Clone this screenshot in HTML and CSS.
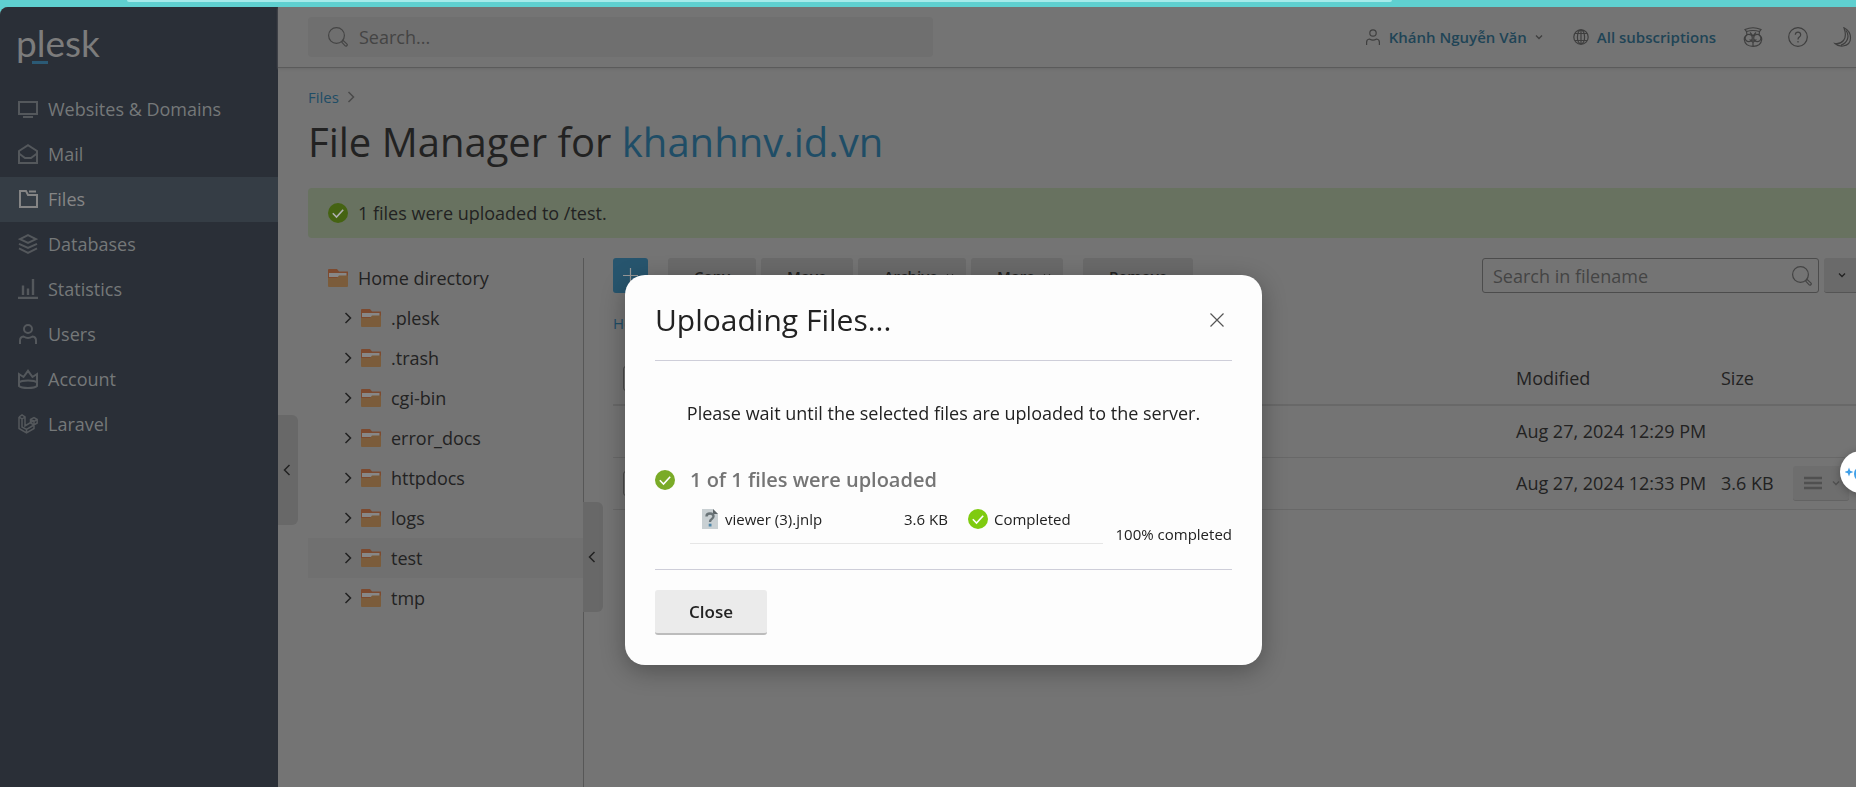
FILE: index.html
```html
<!DOCTYPE html>
<html lang="en">
<head>
<meta charset="utf-8">
<title>File Manager for khanhnv.id.vn</title>
<link rel="stylesheet" href="styles.css">
</head>
<body>
<svg class="defs" aria-hidden="true">
  <symbol id="i-search" viewBox="0 0 20 20"><g fill="none" stroke="currentColor" stroke-width="1.2"><circle cx="8.500" cy="8.500" r="7.900"/><path d="M14 14.200l1-.9 4 3.800c.9 1-.8 2.700-1.800 1.800l-3.700-4"/></g></symbol>
  <symbol id="i-right" viewBox="0 0 8 12"><path d="M1.500 1l5 5-5 5" fill="none" stroke="currentColor" stroke-width="1.500"/></symbol>
  <symbol id="i-left" viewBox="0 0 8 12"><path d="M6.500 1l-5 5 5 5" fill="none" stroke="currentColor" stroke-width="1.500"/></symbol>
  <symbol id="i-down" viewBox="0 0 8 6"><path d="M1 1.500l3 3 3-3" fill="none" stroke="currentColor" stroke-width="1.300"/></symbol>
  <symbol id="i-user" viewBox="0 0 20 20"><g fill="none" stroke="currentColor"><circle cx="10" cy="5" r="4"/><path d="M2 20v-3.500Q2 13 5.500 12.500Q8 14 10 14T14.500 12.500Q18 13 18 16.500V20"/></g></symbol>
  <symbol id="i-folder" viewBox="0 0 20 18"><path d="M1 0h8l2 2.500h9V9H0V1q0-1 1-1z" fill="#7d4a2f"/><path d="M1 4h17.500v4H1z" fill="#878787"/><path d="M0 9h9l2-2.500h9V17q0 1-1 1H1q-1 0-1-1z" fill="#7b5c3b"/></symbol>
  <symbol id="i-check" viewBox="0 0 20 20"><circle cx="10" cy="10" r="10" fill="currentColor"/><path d="M4.800 10.300l3.700 3.700 6.700-7.200" fill="none" stroke="var(--tick)" stroke-width="1.600"/></symbol>
</svg>

<div class="browser-edge"><div class="browser-tab"></div></div>
<div class="app">
  <aside class="sidebar">
    <a class="logo" href="#">plesk</a>
    <nav class="nav">
      <a href="#"><svg viewBox="0 0 20 20"><path d="M1 3h18v12H1zM5 18h10" fill="none" stroke="currentColor" stroke-width="2"/></svg>Websites &amp; Domains</a>
      <a href="#"><svg viewBox="0 0 20 20"><path d="M1 7l9-5.800L19 7v12H1zM1 9.500l6 4.500h6l6-4.500" fill="none" stroke="currentColor" stroke-width="2"/></svg>Mail</a>
      <a href="#" class="active"><svg viewBox="0 0 20 20"><path d="M2 2h6l2 4h9v12H2zM11 2.500h7" fill="none" stroke="currentColor" stroke-width="2"/></svg>Files</a>
      <a href="#"><svg viewBox="0 0 20 20"><path d="M10 1.200l8 3.900-8 3.900-8-3.900zM1 9.800l9 4.200 9-4.200M1 14.300l9 4.500 9-4.500" fill="none" stroke="currentColor" stroke-width="2"/></svg>Databases</a>
      <a href="#"><svg viewBox="0 0 20 20"><path d="M0 19h20M5 16V6.500M10 16V9.500M15 16V0" fill="none" stroke="currentColor" stroke-width="2.400"/></svg>Statistics</a>
      <a href="#"><svg viewBox="0 0 20 20" stroke-width="2"><use href="#i-user"/></svg>Users</a>
      <a href="#"><svg viewBox="0 0 20 20"><path d="M1 17V5l4.500 3L10 1.800 14.500 8 19 5v12q-2 2-9 2t-9-2zM1 13.500q2-2 9-2t9 2" fill="none" stroke="currentColor" stroke-width="2"/></svg>Account</a>
      <a href="#"><svg viewBox="0 0 20 20"><path d="M1 3l3-2 3 2v9l9-5.500M1 3v11.500L8.500 19l7.500-4.500V11M1 3l3 2v8l4.500 2.500 7.500-4.500M7 3L4 5M8.500 15.500V19M12.500 5.500L16 3.500l3.200 2V9L16 11l-3.500-2zM12.500 5.500L16 7.500l3.200-2M16 7.500V11" fill="none" stroke="currentColor" stroke-width="1.500"/></svg>Laravel</a>
    </nav>
  </aside>

  <div class="page">
    <button class="handle handle-side" aria-label="Collapse menu"><svg viewBox="0 0 8 12"><use href="#i-left"/></svg></button>
    <header class="topbar">
      <label class="search"><svg viewBox="0 0 20 20"><use href="#i-search"/></svg><input type="text" placeholder="Search..." aria-label="Search"></label>
      <div class="tools">
        <a href="#" class="account"><svg class="s15" viewBox="0 0 20 20" stroke-width="1.500"><use href="#i-user"/></svg>Khánh Nguyễn Văn<svg class="down" viewBox="0 0 8 6"><use href="#i-down"/></svg></a>
        <a href="#" class="subs"><svg class="s15" viewBox="0 0 16 16"><g fill="none" stroke="currentColor" stroke-width="1.200"><circle cx="8" cy="8" r="7.200"/><ellipse cx="8" cy="8" rx="3.600" ry="7.200"/><path d="M8 1v14M2 4.500h12M2 11.500h12"/></g></svg>All subscriptions</a>
        <button aria-label="Advisor"><svg viewBox="0 0 20 20"><g fill="none" stroke="currentColor" stroke-width="1.200"><path d="M2 2.500Q10-1 18 2.500L16.500 4.500Q10 2.500 3.500 4.500zM3.500 4.500L4 8M16.500 4.500L16 8M4 8Q1 10 1.300 12.500 2 19.300 10 19.300t8.700-6.800Q19 10 16 8M7 5.500l3 3.500 3-3.500M7.500 13.200h5L10 15.500zM10 15.500v3.500"/><circle cx="5.700" cy="11" r="3.600"/><circle cx="14.300" cy="11" r="3.600"/></g></svg></button>
        <button aria-label="Help"><svg viewBox="0 0 20 20"><g fill="none" stroke="currentColor" stroke-width="1.200"><circle cx="10" cy="10" r="9.300"/><path d="M7.300 7.800Q7.500 5.200 10 5.200t2.700 2.500Q12.700 9 11.300 10T10 12.500"/><path d="M10 14v1.500"/></g></svg></button>
        <button aria-label="Dark mode"><svg viewBox="0 0 20 20"><path d="M11 .8Q17.500 4 17.500 11T10 19Q5 19.500 2 16.500q5 1 8.500-3T11 .8zM13 3.500q3 4 1.500 8.500T8 18" fill="none" stroke="currentColor" stroke-width="1.200"/></svg></button>
      </div>
    </header>

    <main class="content">
      <nav class="crumbs"><a href="#">Files</a><svg viewBox="0 0 8 12"><use href="#i-right"/></svg></nav>
      <h1>File Manager for <a href="#">khanhnv.id.vn</a></h1>
      <div class="alert"><svg viewBox="0 0 20 20"><use href="#i-check"/></svg>1 files were uploaded to /test.</div>

      <div class="manager">
        <div class="tree">
          <ul>
            <li class="root"><svg class="folder" viewBox="0 0 20 18"><use href="#i-folder"/></svg>Home directory</li>
            <li><svg class="arrow" viewBox="0 0 8 12"><use href="#i-right"/></svg><svg class="folder" viewBox="0 0 20 18"><use href="#i-folder"/></svg>.plesk</li>
            <li><svg class="arrow" viewBox="0 0 8 12"><use href="#i-right"/></svg><svg class="folder" viewBox="0 0 20 18"><use href="#i-folder"/></svg>.trash</li>
            <li><svg class="arrow" viewBox="0 0 8 12"><use href="#i-right"/></svg><svg class="folder" viewBox="0 0 20 18"><use href="#i-folder"/></svg>cgi-bin</li>
            <li><svg class="arrow" viewBox="0 0 8 12"><use href="#i-right"/></svg><svg class="folder" viewBox="0 0 20 18"><use href="#i-folder"/></svg>error_docs</li>
            <li><svg class="arrow" viewBox="0 0 8 12"><use href="#i-right"/></svg><svg class="folder" viewBox="0 0 20 18"><use href="#i-folder"/></svg>httpdocs</li>
            <li><svg class="arrow" viewBox="0 0 8 12"><use href="#i-right"/></svg><svg class="folder" viewBox="0 0 20 18"><use href="#i-folder"/></svg>logs</li>
            <li class="current"><svg class="arrow" viewBox="0 0 8 12"><use href="#i-right"/></svg><svg class="folder" viewBox="0 0 20 18"><use href="#i-folder"/></svg>test</li>
            <li><svg class="arrow" viewBox="0 0 8 12"><use href="#i-right"/></svg><svg class="folder" viewBox="0 0 20 18"><use href="#i-folder"/></svg>tmp</li>
          </ul>
        </div>
        <div class="files">
          <button class="handle handle-tree" aria-label="Collapse tree"><svg viewBox="0 0 8 12"><use href="#i-left"/></svg></button>
          <div class="toolbar">
            <button class="add" aria-label="Add"><svg viewBox="0 0 15 15"><path d="M7.500 0v15M0 7.500h15" stroke="currentColor" stroke-width="1.200"/></svg></button>
            <div class="group">
              <button class="btn">Copy</button>
              <button class="btn">Move</button>
              <button class="btn drop">Archive<svg class="down" viewBox="0 0 8 6"><use href="#i-down"/></svg></button>
              <button class="btn drop">More<svg class="down" viewBox="0 0 8 6"><use href="#i-down"/></svg></button>
            </div>
            <button class="btn">Remove</button>
            <div class="filter">
              <label class="field"><input type="text" placeholder="Search in filename" aria-label="Search in filename"><svg viewBox="0 0 20 20"><use href="#i-search"/></svg></label>
              <button class="btn more" aria-label="Search options"><svg class="down" viewBox="0 0 8 6"><use href="#i-down"/></svg></button>
            </div>
          </div>
          <nav class="path"><a href="#">Home</a></nav>
          <table>
            <thead><tr><th class="pick"><input type="checkbox" aria-label="Select all"></th><th></th><th class="date">Modified</th><th class="size">Size</th><th class="act"></th></tr></thead>
            <tbody>
              <tr><td class="pick"></td><td></td><td>Aug 27, 2024 12:29 PM</td><td></td><td></td></tr>
              <tr><td class="pick"><input type="checkbox" aria-label="Select file"></td><td></td><td>Aug 27, 2024 12:33 PM</td><td>3.6 KB</td><td><button class="menu" aria-label="File actions"><svg class="bars" viewBox="0 0 18 14"><path d="M0 2h18M0 7h18M0 12h18" stroke="currentColor" stroke-width="2.400"/></svg><svg class="down" viewBox="0 0 8 6"><use href="#i-down"/></svg></button></td></tr>
            </tbody>
          </table>
        </div>
      </div>
    </main>
  </div>
</div>

<div class="overlay">
  <section class="dialog" role="dialog" aria-labelledby="dlg-title">
    <div class="dialog-head"><h2 id="dlg-title">Uploading Files...</h2><button class="x" aria-label="Dismiss"><svg viewBox="0 0 14 14"><path d="M.5.500l13 13M13.500.500l-13 13" stroke="currentColor" stroke-width="1.200"/></svg></button></div>
    <div class="dialog-body">
      <p class="wait">Please wait until the selected files are uploaded to the server.</p>
      <h3><svg viewBox="0 0 20 20"><use href="#i-check"/></svg>1 of 1 files were uploaded</h3>
      <div class="progress">
        <div class="upload">
          <span class="name"><svg class="doc" viewBox="0 0 16 20"><path d="M0 0h11l5 5v15H0z" fill="#c9d0d3"/><path d="M11 0l5 5h-5z" fill="#5d6568"/><path d="M4.500 7.500q0-3 3.500-3t3.500 2.800q0 1.700-2 2.900Q8 11 8 13" fill="none" stroke="#6a7478" stroke-width="2.400"/><path d="M6.700 14.700h2.800v2.800H6.700z" fill="#4f86a8"/></svg>viewer (3).jnlp</span>
          <span class="kb">3.6 KB</span>
          <span class="state"><svg class="done" viewBox="0 0 20 20"><use href="#i-check"/></svg>Completed</span>
        </div>
        <span class="percent">100% completed</span>
      </div>
    </div>
    <div class="dialog-foot"><button class="close">Close</button></div>
  </section>
</div>
<button class="assistant" aria-label="Assistant"><svg viewBox="0 0 28 20"><path d="M4 5.500l1.200 3.300L8.500 10l-3.300 1.200L4 14.500l-1.200-3.300L-.500 10l3.300-1.200z" fill="#3f9fe8"/><circle cx="17" cy="12" r="6" fill="none" stroke="#3f9fe8" stroke-width="4"/></svg></button>
</body>
</html>
```
FILE: styles.css
```css
* { box-sizing: border-box; }
body {
  margin: 0;
  height: 100vh;
  display: flex;
  flex-direction: column;
  overflow: hidden;
  background: #5fd0d0;
  font: 18px/24px "Open Sans", "Noto Sans", sans-serif;
  color: #222;
}
a { color: inherit; text-decoration: none; }
button { font: inherit; color: inherit; border: 0; padding: 0; background: none; }
input { font: inherit; color: inherit; }
svg { display: block; flex: none; }
.defs { position: absolute; width: 0; height: 0; }

.browser-edge { height: 7px; flex: none; padding: 0 25% 0 127px; }
.browser-tab { height: 2px; background: #a6eaea; border-radius: 0 0 4px 4px; }
.app { flex: 1; display: flex; min-height: 0; background: #747474; border-top-left-radius: 8px; overflow: hidden; }

.sidebar { width: 278px; flex: none; background: #2a2f37; }
.logo {
  display: block;
  position: relative;
  height: 80px;
  padding: 8px 0 0 16px;
  font: 400 37px/56px Lato, sans-serif;
  color: #7c7c7c;
}
.logo::after { content: ""; position: absolute; left: 32px; top: 54px; width: 16px; height: 3px; background: #2b5a75; }
.nav a { display: flex; align-items: center; gap: 10px; height: 45px; padding: 0 0 1px 18px; color: #757879; font-weight: 500; }
.nav svg { width: 20px; height: 20px; color: #54585c; }
.nav .active { background: #353d45; color: #858585; }
.nav .active svg { color: #858585; }

.page { flex: 1; min-width: 0; position: relative; display: flex; flex-direction: column; }
.handle { position: absolute; left: 0; width: 20px; height: 110px; padding-left: 5px; background: #686868; border-radius: 0 6px 6px 0; }
.handle svg { width: 8px; height: 12px; }
.handle-side { top: 408px; }
.handle-tree { top: 244px; left: -1px; }

.topbar { display: flex; align-items: center; justify-content: space-between; height: 61px; flex: none; padding: 0 3px 0 30px; border-bottom: 1px solid #5b5b5b; box-shadow: 0 1px 2px #6a6a6a; }
.search { display: flex; align-items: center; gap: 11px; width: 625px; height: 40px; padding-left: 20px; background: #6f6f6f; border-radius: 4px; color: #454545; }
.search svg { width: 20px; height: 20px; }
.search input, .field input { flex: 1; min-width: 0; padding: 0; border: 0; background: none; outline: 0; }
input::placeholder { color: #444; opacity: 1; }
.tools { display: flex; align-items: center; gap: 25px; color: #3f3f3f; }
.tools svg { width: 20px; height: 20px; }
.tools a { display: flex; align-items: center; gap: 8px; color: #204456; font-size: 15px; font-weight: 600; }
.tools a svg { color: #3f3f3f; }
.tools .s15 { width: 16px; height: 16px; }
.tools .down { width: 8px; height: 6px; }
.subs { margin: 0 2px 0 5px; }
.down { width: 8px; height: 6px; }

.content { flex: 1; min-height: 0; padding: 17px 0 0 30px; display: flex; flex-direction: column; }
.crumbs { display: flex; align-items: center; gap: 8px; font-size: 15px; color: #4a4a4a; }
.crumbs a, h1 a, .path { color: #1f4d66; }
.crumbs svg { width: 8px; height: 12px; }
h1 { margin: 5px 0 18px; font-size: 40px; line-height: 56px; font-weight: 400; }
.alert { --tick: #b0b0b0; display: flex; align-items: center; gap: 10px; height: 50px; flex: none; padding-left: 20px; background: #687260; border-radius: 4px 0 0 4px; }
.alert svg { width: 20px; height: 20px; color: #456312; }

.manager { flex: 1; min-height: 0; display: flex; margin-top: 20px; }
.tree { width: 276px; flex: none; border-right: 1px solid #575757; }
.tree ul { margin: 0; padding: 0; list-style: none; }
.tree li { display: flex; align-items: center; height: 40px; padding-left: 36px; }
.tree .root { padding-left: 20px; }
.arrow { width: 8px; height: 12px; margin-right: 9px; }
.folder { width: 20px; height: 18px; margin-right: 10px; }
.tree .current { background: #707070; }

.files { flex: 1; min-width: 0; position: relative; padding-left: 29px; }
.toolbar { display: flex; gap: 20px; }
.group { display: flex; gap: 5px; }
.add { display: grid; place-items: center; width: 35px; height: 35px; background: #27556e; color: #999; border-radius: 3px; }
.add svg { width: 15px; height: 15px; }
.btn { display: flex; align-items: center; gap: 8px; height: 35px; padding: 0 26px; background: #6a6a6a; border-radius: 3px; font-size: 15px; font-weight: 600; }
.drop { padding-right: 12px; }
.filter { display: flex; gap: 5px; margin-left: auto; }
.field { display: flex; align-items: center; width: 337px; height: 35px; padding: 0 6px 0 10px; border: 1px solid #4c4c4c; border-radius: 3px; color: #444; }
.field svg { width: 20px; height: 20px; }
.more { width: 32px; padding: 0 0 0 14px; border-bottom: 1px solid #555; border-radius: 3px 0 0 3px; }
.path { margin: 18px 0 17px; font-size: 15px; }

table { width: 100%; border-collapse: collapse; table-layout: fixed; }
th { height: 53px; padding: 0; text-align: left; font-weight: 400; border-bottom: 2px solid #686868; }
td { height: 52px; padding: 0; border-bottom: 1px solid #686868; }
.pick { width: 45px; padding-left: 10px; }
.pick input { display: block; appearance: none; width: 25px; height: 25px; margin: 0; border: 1px solid #4c4c4c; border-radius: 3px; }
.date { width: 205px; }
.size { width: 72px; }
.act { width: 63px; }
.menu { display: flex; align-items: center; gap: 10px; width: 56px; height: 35px; padding-left: 11px; background: #6e6e6e; border-bottom: 1px solid #636363; border-radius: 3px; color: #505050; }
.bars { width: 18px; height: 14px; }

.overlay { position: fixed; inset: 0; display: flex; align-items: flex-start; justify-content: center; padding-top: 275px; padding-left: 31px; }
.dialog { width: 637px; padding: 0 30px 30px; background: #fdfdfd; border-radius: 20px; box-shadow: 0 6px 24px rgba(0, 0, 0, .3); }
.dialog-head { display: flex; align-items: center; justify-content: space-between; height: 86px; padding: 5px 8px 0 0; border-bottom: 1px solid #ceced9; }
h2 { margin: 0; font-size: 30px; line-height: 40px; font-weight: 400; }
.x svg { width: 14px; height: 14px; color: #555; }
.dialog-body { padding: 40px 0 25px; border-bottom: 1px solid #ceced9; --tick: #fff; }
.wait { margin: 0 0 42px; text-align: center; }
h3 { display: flex; align-items: center; gap: 15px; margin: 0; font-size: 20px; line-height: 25px; font-weight: 600; color: #757575; }
h3 svg { width: 20px; height: 20px; color: #7aab27; }
.progress { display: flex; align-items: flex-end; justify-content: space-between; padding-left: 35px; font-size: 15px; }
.upload { display: flex; width: 413px; height: 52px; padding: 15px 0 0 12px; border-bottom: 1px solid #e6e6e6; }
.upload span { display: flex; align-items: center; height: 24px; }
.name { gap: 7px; width: 202px; }
.doc { width: 16px; height: 20px; }
.kb { width: 64px; }
.state { gap: 6px; }
.done { width: 20px; height: 20px; color: #7fcb10; }
.percent { margin-bottom: -2px; }
.dialog-foot { padding-top: 20px; }
.close { display: block; width: 112px; height: 45px; background: #ebebeb; border-bottom: 2px solid #bcbcbc; border-radius: 3px; font-size: 17px; font-weight: 600; }
.assistant { position: fixed; right: -26px; top: 451px; width: 42px; height: 42px; padding-left: 5px; border-radius: 50%; background: #fff; box-shadow: 0 2px 8px rgba(0, 0, 0, .3); }
.assistant svg { width: 28px; height: 20px; }
```
